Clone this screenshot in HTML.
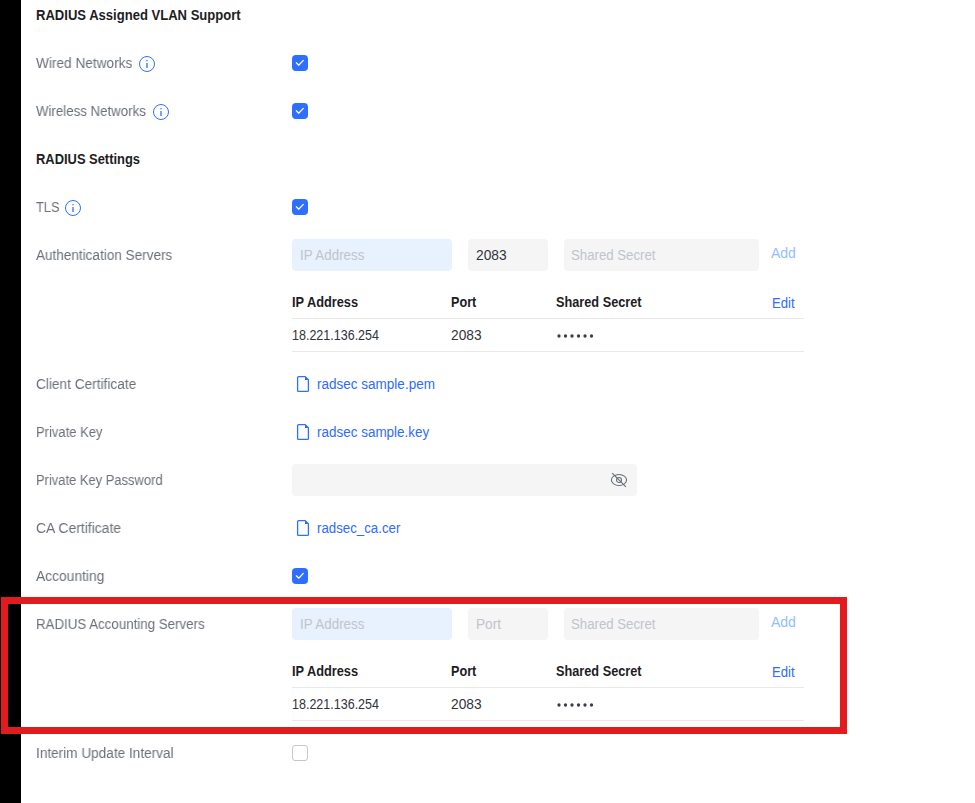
<!DOCTYPE html>
<html><head><meta charset="utf-8">
<style>
html,body{margin:0;padding:0;}
body{width:975px;height:803px;overflow:hidden;background:#fff;position:relative;font-family:"Liberation Sans",sans-serif;font-size:14px;}
.bar{position:absolute;left:0;top:0;width:21px;height:803px;background:#000;}
.t{position:absolute;white-space:nowrap;line-height:20px;font-size:14px;transform-origin:0 50%;}
.h{font-weight:700;color:#1d1d1f;}
.l{color:#6b7078;will-change:transform;}
.d{color:#30343b;}
.lk{color:#2f6bff;}
.add{color:#94bdff;}
.ph{color:#c0c4cc;}
.cb{position:absolute;width:16px;height:16px;border-radius:4px;background:#2f6fff;}
.cb svg{position:absolute;left:0;top:0;}
.cbo{position:absolute;width:14px;height:14px;border-radius:3px;border:1px solid #c4c8ce;background:#fff;}
.inp{position:absolute;height:32px;border-radius:4px;background:#f5f5f5;}
.blue{background:#e8f1fe;}
.ln{position:absolute;height:1px;background:#e8e8e8;left:292px;width:512px;}
.ic{position:absolute;}
.dots{position:absolute;left:0;height:3px;width:1px;}
.dot{position:absolute;top:-1.5px;width:3.2px;height:3.2px;border-radius:50%;background:#3a3f47;margin-left:-1.6px;}
.red{position:absolute;left:1px;top:597px;width:832px;height:123px;border:7px solid #e21c1c;}
</style></head><body>
<div class="bar"></div>
<div class="t h" style="left:36px;top:5px;transform:scaleX(0.9318);">RADIUS Assigned VLAN Support</div>
<div class="t l" style="left:36px;top:53px;transform:scaleX(0.9747);">Wired Networks</div>
<svg class="ic" style="left:139px;top:56px" width="16" height="16" viewBox="0 0 16 16"><circle cx="8" cy="8" r="7.5" fill="none" stroke="#2f6fff" stroke-width="1"/><rect x="7.35" y="4.1" width="1.3" height="1.2" fill="#2f6fff"/><rect x="7.35" y="7" width="1.3" height="5" fill="#2f6fff"/></svg>
<div class="cb" style="left:292px;top:55px"><svg width="16" height="16" viewBox="0 0 16 16"><path d="M4.4 7.8 L6.7 10.2 L11.3 5.4" fill="none" stroke="#fff" stroke-width="1.25" stroke-linecap="round" stroke-linejoin="round"/></svg></div>
<div class="t l" style="left:36px;top:101px;transform:scaleX(0.9470);">Wireless Networks</div>
<svg class="ic" style="left:153px;top:104px" width="16" height="16" viewBox="0 0 16 16"><circle cx="8" cy="8" r="7.5" fill="none" stroke="#2f6fff" stroke-width="1"/><rect x="7.35" y="4.1" width="1.3" height="1.2" fill="#2f6fff"/><rect x="7.35" y="7" width="1.3" height="5" fill="#2f6fff"/></svg>
<div class="cb" style="left:292px;top:103px"><svg width="16" height="16" viewBox="0 0 16 16"><path d="M4.4 7.8 L6.7 10.2 L11.3 5.4" fill="none" stroke="#fff" stroke-width="1.25" stroke-linecap="round" stroke-linejoin="round"/></svg></div>
<div class="t h" style="left:36px;top:149px;transform:scaleX(0.9221);">RADIUS Settings</div>
<div class="t l" style="left:36px;top:197px;transform:scaleX(0.9220);">TLS</div>
<svg class="ic" style="left:65px;top:200px" width="16" height="16" viewBox="0 0 16 16"><circle cx="8" cy="8" r="7.5" fill="none" stroke="#2f6fff" stroke-width="1"/><rect x="7.35" y="4.1" width="1.3" height="1.2" fill="#2f6fff"/><rect x="7.35" y="7" width="1.3" height="5" fill="#2f6fff"/></svg>
<div class="cb" style="left:292px;top:199px"><svg width="16" height="16" viewBox="0 0 16 16"><path d="M4.4 7.8 L6.7 10.2 L11.3 5.4" fill="none" stroke="#fff" stroke-width="1.25" stroke-linecap="round" stroke-linejoin="round"/></svg></div>
<div class="t l" style="left:36px;top:245px;transform:scaleX(0.9674);">Authentication Servers</div>
<div class="inp blue" style="left:292px;top:239px;width:160px"></div>
<div class="t ph" style="left:300px;top:245px;transform:scaleX(0.9545);">IP Address</div>
<div class="inp" style="left:468px;top:239px;width:80px"></div>
<div class="t d" style="left:476px;top:245px;transform:scaleX(0.9806);">2083</div>
<div class="inp" style="left:564px;top:239px;width:195px"></div>
<div class="t ph" style="left:571px;top:245px;transform:scaleX(0.9432);">Shared Secret</div>
<div class="t add" style="left:771px;top:243px;">Add</div>
<div class="t h" style="left:292px;top:292px;transform:scaleX(0.9125);">IP Address</div>
<div class="t h" style="left:451px;top:292px;transform:scaleX(0.9036);">Port</div>
<div class="t h" style="left:556px;top:292px;transform:scaleX(0.9084);">Shared Secret</div>
<div class="t lk" style="left:772px;top:293px;transform:scaleX(0.9375);">Edit</div>
<div class="ln" style="top:318px"></div>
<div class="t d" style="left:292px;top:325px;transform:scaleX(0.8939);">18.221.136.254</div>
<div class="t d" style="left:451px;top:325px;transform:scaleX(0.9806);">2083</div>
<svg class="ic" style="left:555.35px;top:331.9px" width="45" height="8" viewBox="0 0 45 8" fill="#383d46"><circle cx="4.00" cy="4" r="1.65"/><circle cx="10.50" cy="4" r="1.65"/><circle cx="17.00" cy="4" r="1.65"/><circle cx="23.50" cy="4" r="1.65"/><circle cx="30.00" cy="4" r="1.65"/><circle cx="36.50" cy="4" r="1.65"/></svg>
<div class="ln" style="top:351px"></div>
<div class="t l" style="left:36px;top:374px;transform:scaleX(0.9757);">Client Certificate</div>
<svg class="ic" style="left:296px;top:375px" width="14" height="18" viewBox="0 0 14 18"><path d="M2.6 1.6 H9.2 L12.4 4.8 V15.4 Q12.4 16.4 11.4 16.4 H2.6 Q1.6 16.4 1.6 15.4 V2.6 Q1.6 1.6 2.6 1.6 Z" fill="none" stroke="#2f6fff" stroke-width="1.3" stroke-linejoin="round"/><path d="M9 1.6 L12.4 5 H9 Z" fill="#2f6fff"/></svg>
<div class="t lk" style="left:316.5px;top:374px;transform:scaleX(0.9653);">radsec sample.pem</div>
<div class="t l" style="left:36px;top:422px;transform:scaleX(0.9296);">Private Key</div>
<svg class="ic" style="left:296px;top:423px" width="14" height="18" viewBox="0 0 14 18"><path d="M2.6 1.6 H9.2 L12.4 4.8 V15.4 Q12.4 16.4 11.4 16.4 H2.6 Q1.6 16.4 1.6 15.4 V2.6 Q1.6 1.6 2.6 1.6 Z" fill="none" stroke="#2f6fff" stroke-width="1.3" stroke-linejoin="round"/><path d="M9 1.6 L12.4 5 H9 Z" fill="#2f6fff"/></svg>
<div class="t lk" style="left:316.5px;top:422px;transform:scaleX(0.9621);">radsec sample.key</div>
<div class="t l" style="left:36px;top:470px;transform:scaleX(0.9243);">Private Key Password</div>
<div class="inp" style="left:292px;top:464px;width:345px"></div>
<svg class="ic" style="left:609px;top:471px" width="20" height="18" viewBox="0 0 20 18"><ellipse cx="10" cy="9" rx="7.6" ry="5.5" fill="none" stroke="#656b75" stroke-width="1.05"/><circle cx="10" cy="8.9" r="2.5" fill="none" stroke="#656b75" stroke-width="1.05"/><path d="M3.2 2.2 L16.9 15.8" stroke="#656b75" stroke-width="1.05"/></svg>
<div class="t l" style="left:36px;top:518px;transform:scaleX(0.9941);">CA Certificate</div>
<svg class="ic" style="left:296px;top:519px" width="14" height="18" viewBox="0 0 14 18"><path d="M2.6 1.6 H9.2 L12.4 4.8 V15.4 Q12.4 16.4 11.4 16.4 H2.6 Q1.6 16.4 1.6 15.4 V2.6 Q1.6 1.6 2.6 1.6 Z" fill="none" stroke="#2f6fff" stroke-width="1.3" stroke-linejoin="round"/><path d="M9 1.6 L12.4 5 H9 Z" fill="#2f6fff"/></svg>
<div class="t lk" style="left:316.5px;top:518px;transform:scaleX(0.9483);">radsec_ca.cer</div>
<div class="t l" style="left:36px;top:566px;transform:scaleX(0.9870);">Accounting</div>
<div class="cb" style="left:292px;top:568px"><svg width="16" height="16" viewBox="0 0 16 16"><path d="M4.4 7.8 L6.7 10.2 L11.3 5.4" fill="none" stroke="#fff" stroke-width="1.25" stroke-linecap="round" stroke-linejoin="round"/></svg></div>
<div class="t l" style="left:36px;top:614px;transform:scaleX(0.9503);">RADIUS Accounting Servers</div>
<div class="inp blue" style="left:292px;top:608px;width:160px"></div>
<div class="t ph" style="left:300px;top:614px;transform:scaleX(0.9545);">IP Address</div>
<div class="inp" style="left:468px;top:608px;width:80px"></div>
<div class="t ph" style="left:475.5px;top:614px;transform:scaleX(0.9760);">Port</div>
<div class="inp" style="left:564px;top:608px;width:195px"></div>
<div class="t ph" style="left:571px;top:614px;transform:scaleX(0.9432);">Shared Secret</div>
<div class="t add" style="left:771px;top:612px;">Add</div>
<div class="t h" style="left:292px;top:661px;transform:scaleX(0.9125);">IP Address</div>
<div class="t h" style="left:451px;top:661px;transform:scaleX(0.9036);">Port</div>
<div class="t h" style="left:556px;top:661px;transform:scaleX(0.9084);">Shared Secret</div>
<div class="t lk" style="left:772px;top:662px;transform:scaleX(0.9375);">Edit</div>
<div class="ln" style="top:687px"></div>
<div class="t d" style="left:292px;top:694px;transform:scaleX(0.8939);">18.221.136.254</div>
<div class="t d" style="left:451px;top:694px;transform:scaleX(0.9806);">2083</div>
<svg class="ic" style="left:555.35px;top:700.9px" width="45" height="8" viewBox="0 0 45 8" fill="#383d46"><circle cx="4.00" cy="4" r="1.65"/><circle cx="10.50" cy="4" r="1.65"/><circle cx="17.00" cy="4" r="1.65"/><circle cx="23.50" cy="4" r="1.65"/><circle cx="30.00" cy="4" r="1.65"/><circle cx="36.50" cy="4" r="1.65"/></svg>
<div class="ln" style="top:720px"></div>
<div class="t l" style="left:36px;top:743px;transform:scaleX(0.9714);">Interim Update Interval</div>
<div class="cbo" style="left:292px;top:745px"></div>
<div class="red"></div>
</body></html>
